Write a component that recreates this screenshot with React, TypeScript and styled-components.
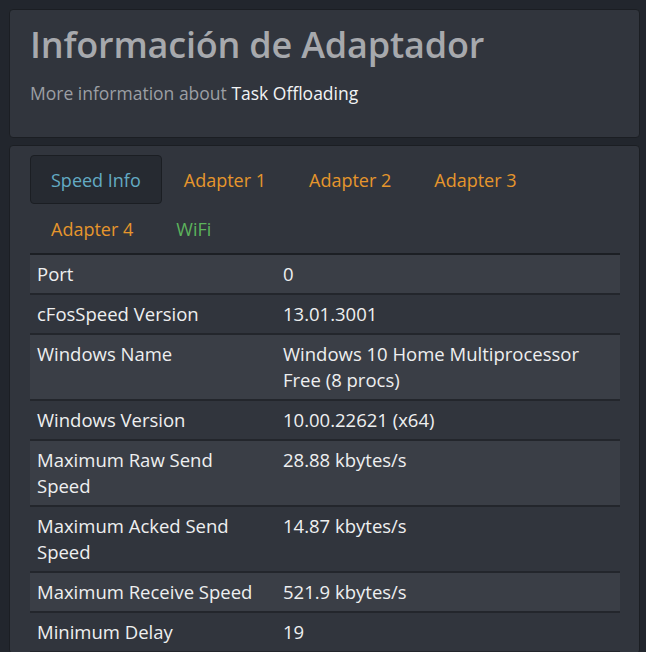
import React from 'react'
import styled, { createGlobalStyle } from 'styled-components'

const GlobalStyle = createGlobalStyle`
  html, body {
    margin: 0;
    padding: 0;
    background: #22262d;
  }
  body {
    font-family: "Open Sans", "Noto Sans", sans-serif;
    color: #e6e7e9;
  }
`

const Page = styled.div`
  display: flex;
  flex-direction: column;
  gap: 7px;
  padding: 9px 6px 0 9px;
  height: 652px;
  box-sizing: border-box;
  overflow: hidden;
`

const Card = styled.section`
  background: #31353d;
  border: 1px solid #1b1e23;
  border-radius: 4px;
  box-sizing: border-box;
`

const HeaderCard = styled(Card)`
  flex: none;
  height: 129px;
  padding: 12px 20px 0 20px;
`

const Title = styled.h1`
  margin: 0;
  font-size: 36px;
  font-weight: 600;
  line-height: 46px;
  color: #a7a9ad;
  letter-spacing: -0.2px;
`

const Subtitle = styled.p`
  margin: 13px 0 0 0;
  font-size: 17.5px;
  line-height: 24px;
  color: #9c9fa4;
`

const Highlight = styled.span`
  color: #f2f3f4;
`

const ContentCard = styled(Card)`
  flex: 1 0 auto;
  padding: 9px 19px 0 20px;
`

const Tabs = styled.nav`
  display: flex;
  flex-wrap: wrap;
`

const Tab = styled.div<{ $active?: boolean; $color: string }>`
  height: 49px;
  box-sizing: border-box;
  padding: 0 20px;
  display: flex;
  align-items: center;
  font-size: 18px;
  color: ${({ $color }) => $color};
  border-radius: 4px;
  border: 1px solid ${({ $active }) => ($active ? '#1b1e23' : 'transparent')};
  background: ${({ $active }) => ($active ? '#262a31' : 'transparent')};
  margin-right: 1px;
`

const Table = styled.table`
  width: 100%;
  border-collapse: collapse;
  border-top: 2px solid #1c1f24;
  font-size: 18.5px;
  line-height: 26px;
`

const Row = styled.tr<{ $striped: boolean }>`
  background: ${({ $striped }) => ($striped ? '#3a3e46' : 'transparent')};
  border-bottom: 2px solid #23262c;
`

const Cell = styled.td`
  padding: 6px 7px;
  vertical-align: top;
  color: #eeeff0;
`

const LabelCell = styled(Cell)`
  width: 232px;
`

const tabs = [
  { label: 'Speed Info', color: '#63aac4', active: true },
  { label: 'Adapter 1', color: '#e6962c' },
  { label: 'Adapter 2', color: '#e6962c' },
  { label: 'Adapter 3', color: '#e6962c' },
  { label: 'Adapter 4', color: '#e6962c' },
  { label: 'WiFi', color: '#5cb35c' },
]

const rows: [string, string][] = [
  ['Port', '0'],
  ['cFosSpeed Version', '13.01.3001'],
  ['Windows Name', 'Windows 10 Home Multiprocessor Free (8 procs)'],
  ['Windows Version', '10.00.22621 (x64)'],
  ['Maximum Raw Send Speed', '28.88 kbytes/s'],
  ['Maximum Acked Send Speed', '14.87 kbytes/s'],
  ['Maximum Receive Speed', '521.9 kbytes/s'],
  ['Minimum Delay', '19'],
]

const App: React.FC = () => {
  return (
    <>
      <GlobalStyle />
      <Page>
        <HeaderCard>
          <Title>Información de Adaptador</Title>
          <Subtitle>
            More information about <Highlight>Task Offloading</Highlight>
          </Subtitle>
        </HeaderCard>
        <ContentCard>
          <Tabs>
            {tabs.map((t) => (
              <Tab key={t.label} $active={t.active} $color={t.color}>
                {t.label}
              </Tab>
            ))}
          </Tabs>
          <Table>
            <tbody>
              {rows.map(([label, value], i) => (
                <Row key={label} $striped={i % 2 === 0}>
                  <LabelCell>{label}</LabelCell>
                  <Cell>{value}</Cell>
                </Row>
              ))}
            </tbody>
          </Table>
        </ContentCard>
      </Page>
    </>
  )
}

export default App
